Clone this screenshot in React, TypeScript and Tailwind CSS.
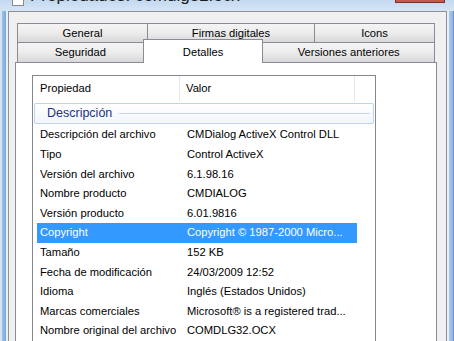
import React from 'react';

const rows: [string, string][] = [
  ['Descripción del archivo', 'CMDialog ActiveX Control DLL'],
  ['Tipo', 'Control ActiveX'],
  ['Versión del archivo', '6.1.98.16'],
  ['Nombre producto', 'CMDIALOG'],
  ['Versión producto', '6.01.9816'],
  ['Copyright', 'Copyright © 1987-2000 Micro...'],
  ['Tamaño', '152 KB'],
  ['Fecha de modificación', '24/03/2009 12:52'],
  ['Idioma', 'Inglés (Estados Unidos)'],
  ['Marcas comerciales', 'Microsoft® is a registered trad...'],
  ['Nombre original del archivo', 'COMDLG32.OCX'],
];

const tabBase =
  'flex items-center justify-center border-t border-l border-r border-[#898c95] bg-gradient-to-b from-[#f4f4f4] via-[#ececec] to-[#d8d8d8] text-black';

export default function App() {
  return (
    <div
      className="w-[454px] h-[341px] overflow-hidden flex flex-col bg-[#cfe0f3] text-[11.2px] text-black"
      style={{ fontFamily: '"Liberation Sans", Arial, sans-serif' }}
    >
      {/* Title bar (top cut off) */}
      <div className="h-[11px] shrink-0 flex items-start overflow-hidden bg-gradient-to-b from-[#c3d8ef] to-[#d6e5f5]">
        <div className="ml-[12px] -mt-[8px] w-[12px] h-[14px] bg-white border border-[#8a8a8a]" />
        <div className="ml-[6px] -mt-[13px] text-[17px] leading-[17px] text-[#1b1b1b] whitespace-nowrap">
          Propiedades: comdlg32.ocx
        </div>
        <div className="ml-auto mr-[9px] w-[50px] h-[3px] bg-[#c25a50] border-b border-l border-r border-[#7a2f2a]" />
      </div>

      <div className="flex flex-1 min-h-0">
        {/* Left frame */}
        <div className="w-[8px] shrink-0 flex">
          <div className="w-[2px] bg-[#d4e4f5]" />
          <div className="w-[4px] bg-gradient-to-r from-[#9dbfe6] to-[#7ea8da]" />
          <div className="w-[2px] bg-[#e6eef8]" />
        </div>

        {/* Dialog body */}
        <div className="flex-1 min-w-0 flex flex-col bg-[#f0f0f0] border-t border-l border-r border-[#8e9297] pt-[11px] pl-[6px] pr-[9px]">
          {/* Tabs */}
          <div className="shrink-0 px-[2px]">
            <div className="flex h-[19px]">
              <div className={`${tabBase} w-[131px]`}>General</div>
              <div className={`${tabBase} w-[168px] -ml-px`}>Firmas digitales</div>
              <div className={`${tabBase} w-[121px] -ml-px`}>Icons</div>
            </div>
            <div className="flex items-end h-[20px]">
              <div className={`${tabBase} w-[127px] h-[20px]`}>Seguridad</div>
              <div className="relative z-10 -ml-px -mb-px w-[121px] h-[24px] flex items-start justify-center pt-[4px] bg-white border-t border-l border-r border-[#898c95]">
                Detalles
              </div>
              <div className={`${tabBase} w-[173px] h-[20px] -ml-px`}>Versiones anteriores</div>
            </div>
          </div>

          {/* Panel */}
          <div className="flex-1 min-h-0 bg-white border-t border-l border-r border-[#898c95] pl-[16px] pt-[12px]">
            <div className="w-[344px] h-full border-t border-l border-r border-[#828790] bg-white">
              {/* Column headers */}
              <div className="flex h-[25px]">
                <div className="w-[147px] flex items-center pl-[7px] border-r border-[#e3e6ea]">Propiedad</div>
                <div className="w-[175px] flex items-center pl-[6px] border-r border-[#e3e6ea]">Valor</div>
                <div className="flex-1" />
              </div>

              {/* Group header */}
              <div className="mx-px mt-[2px] h-[21px] flex items-center rounded-[2px] border border-[#bed3ec] bg-gradient-to-b from-white to-[#f1f6fc] pl-[12px]">
                <span className="text-[12.5px] text-[#1e3287]">Descripción</span>
                <div className="flex-1 h-px ml-[7px] mr-[3px] bg-[#c6d8ee]" />
              </div>

              {/* Rows */}
              <div className="mt-[1px]">
                {rows.map(([k, v]) => {
                  const sel = k === 'Copyright';
                  return (
                    <div
                      key={k}
                      className={`ml-[4px] w-[320px] h-[19.6px] flex items-center whitespace-nowrap ${
                        sel ? 'bg-[#3399ff] text-white' : ''
                      }`}
                    >
                      <div className="w-[147px] pl-[3px] overflow-hidden">{k}</div>
                      <div className="flex-1 pl-[3px] overflow-hidden">{v}</div>
                    </div>
                  );
                })}
              </div>
            </div>
          </div>
        </div>

        {/* Right frame */}
        <div className="w-[7px] shrink-0 flex">
          <div className="w-[2px] bg-[#e6eef8]" />
          <div className="w-[4px] bg-gradient-to-r from-[#a9c9ee] to-[#8fb6e4]" />
          <div className="w-[1px] bg-[#6f96c6]" />
        </div>
      </div>
    </div>
  );
}
